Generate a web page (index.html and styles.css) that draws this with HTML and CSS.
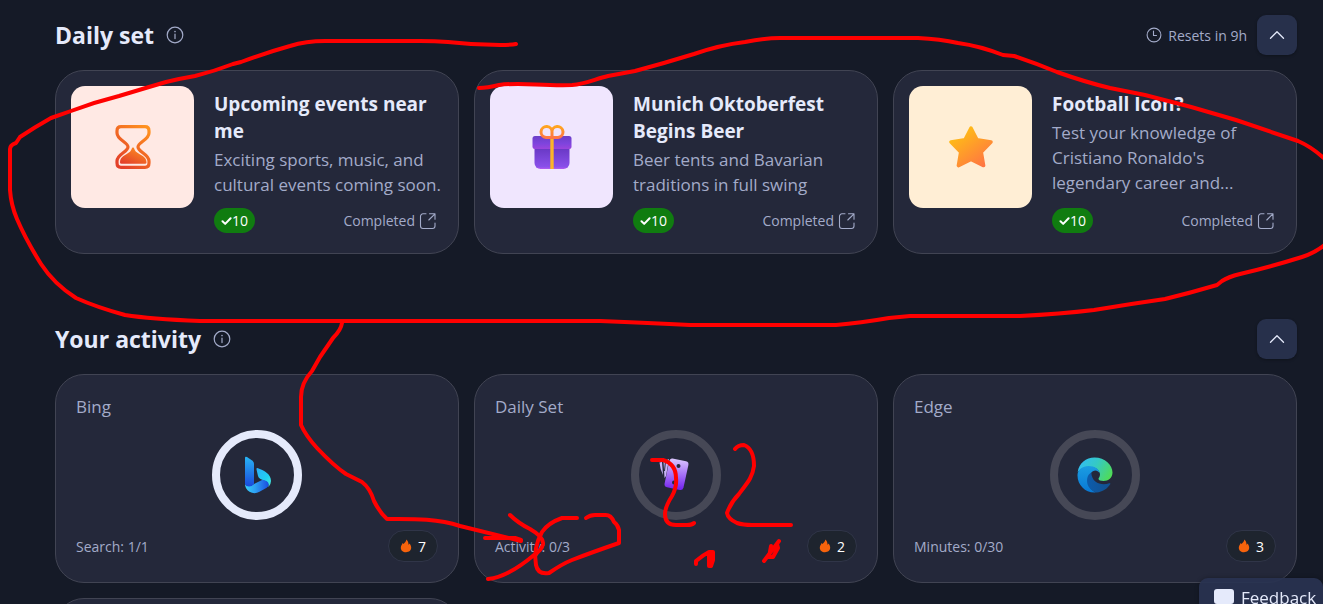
FILE: index.html
```
<!DOCTYPE html>
<html lang="en">
<head>
    <meta charset="UTF-8">
    <meta name="viewport" content="width=device-width, initial-scale=1.0">
    <title>Rewards</title>
    <link rel="stylesheet" href="styles.css">
</head>
<body>

    <!-- shared icons -->
    <svg class="defs" width="0" height="0" aria-hidden="true">
      <symbol id="info" viewBox="0 0 18 18">
        <circle cx="9" cy="9" r="7.8" fill="none" stroke="currentColor" stroke-width="1.2"/>
        <path d="M9 8v4.6" stroke="currentColor" stroke-width="1.2" stroke-linecap="round"/>
        <circle cx="9" cy="5.6" r=".8" fill="currentColor"/>
      </symbol>
      <symbol id="chevron" viewBox="0 0 16 16">
        <path d="M1.5 11.3 8 4.7l6.500 6.600" fill="none" stroke="currentColor" stroke-width="1.3" stroke-linecap="round" stroke-linejoin="round"/>
      </symbol>
      <symbol id="open" viewBox="0 0 18 18">
        <path d="M7 1.800H4A2.500 2.500 0 0 0 1.500 4.300v9.700A2.500 2.500 0 0 0 4 16.500h9.500A2.500 2.500 0 0 0 16 14v-3M10.500 1.800H16v5.500M16 1.800 9.800 8" fill="none" stroke="currentColor" stroke-width="1.1" stroke-linecap="round" stroke-linejoin="round"/>
      </symbol>
      <symbol id="check" viewBox="0 0 11 10">
        <path d="M1.500 5.200 4.200 7.900 9.600 2.300" fill="none" stroke="currentColor" stroke-width="2" stroke-linecap="round" stroke-linejoin="round"/>
      </symbol>
      <symbol id="flame" viewBox="0 0 12 14">
        <path d="M6.200.5c.3 2-1.700 3.200-2.600 4.600C3.300 4.600 3 4.200 2.600 4 2.400 5.200.8 6.600.8 8.700c0 2.700 2.200 4.600 5.200 4.600s5.200-1.900 5.200-4.700c0-1.900-.9-3.100-1.700-4.200-.2.700-.5 1.100-1 1.400C8.600 3.800 7.900 1.700 6.200.5z" fill="#f7630c"/>
      </symbol>
    </svg>

    <main>
      <section>
        <div class="section-head">
          <h1>Daily set</h1>
          <svg class="info-icon"><use href="#info"/></svg>
          <div class="resets">
            <svg viewBox="0 0 16 16" width="16" height="16"><circle cx="8" cy="8" r="6.900" fill="none" stroke="currentColor" stroke-width="1.100"/><path d="M7.500 4v4.500h3" fill="none" stroke="currentColor" stroke-width="1.100" stroke-linecap="round" stroke-linejoin="round"/></svg>
            Resets in 9h
          </div>
          <button class="collapse" aria-label="Collapse daily set"><svg><use href="#chevron"/></svg></button>
        </div>

        <div class="cards">
          <article class="card offer">
            <div class="tile tile-pink">
              <svg viewBox="0 0 36 44" width="36" height="44">
                <defs>
                  <linearGradient id="hg" x1=".9" y1="0" x2=".2" y2="1"><stop offset="0" stop-color="#ff921f"/><stop offset="1" stop-color="#e3402a"/></linearGradient>
                </defs>
                <path d="M6 1.700H30Q34 1.700 34 6V8C34 15 23 17 23 22S34 29 34 36V38Q34 42.300 30 42.300H6Q2 42.300 2 38V36C2 29 13 27 13 22S2 15 2 8V6Q2 1.700 6 1.700Z" fill="none" stroke="url(#hg)" stroke-width="3.200"/>
                <path d="M18 22.500C19.500 22.500 19.200 25 21 26.800 26 30.800 31.500 31.500 31.500 37.500Q31.500 38.800 30 38.800H6.500Q5 38.800 5 37.500C5 31.500 10 30.800 15 26.800 16.800 25 16.500 22.500 18 22.500Z" fill="url(#hg)"/>
              </svg>
            </div>
            <div class="offer-body">
              <h2>Upcoming events near me</h2>
              <p>Exciting sports, music, and cultural events coming soon.</p>
              <div class="offer-foot">
                <span class="points"><svg><use href="#check"/></svg>10</span>
                <a href="#">Completed <svg><use href="#open"/></svg></a>
              </div>
            </div>
          </article>

          <article class="card offer">
            <div class="tile tile-purple">
              <svg viewBox="0 0 40 44" width="40" height="44">
                <defs>
                  <linearGradient id="lid" x1="0" y1="0" x2="0" y2="1"><stop offset="0" stop-color="#6b3fc8"/><stop offset=".6" stop-color="#7f44de"/><stop offset="1" stop-color="#9b45dc"/></linearGradient>
                  <linearGradient id="box" x1="0" y1="0" x2="0" y2="1"><stop offset="0" stop-color="#6838c4"/><stop offset=".9" stop-color="#8a50ea"/><stop offset="1" stop-color="#b65df0"/></linearGradient>
                  <linearGradient id="bow" x1="0" y1="0" x2="0" y2="1"><stop offset="0" stop-color="#ffa51f"/><stop offset="1" stop-color="#ff7545"/></linearGradient>
                </defs>
                <path d="M2.500 23h35v15a6 6 0 0 1-6 6h-23a6 6 0 0 1-6-6z" fill="url(#box)"/>
                <rect x=".5" y="11" width="39" height="13" rx="2.500" fill="url(#lid)"/>
                <rect x="18.300" y="13" width="3.400" height="31" fill="#fbb429"/>
                <path d="M20 12.500V7.500A5.500 5.500 0 1 0 14 12.500ZM20 12.500V7.500A5.500 5.500 0 1 1 26 12.500Z" fill="#f0e4fd" stroke="url(#bow)" stroke-width="3"/>
              </svg>
            </div>
            <div class="offer-body">
              <h2>Munich Oktoberfest Begins Beer</h2>
              <p>Beer tents and Bavarian traditions in full swing</p>
              <div class="offer-foot">
                <span class="points"><svg><use href="#check"/></svg>10</span>
                <a href="#">Completed <svg><use href="#open"/></svg></a>
              </div>
            </div>
          </article>

          <article class="card offer">
            <div class="tile tile-cream">
              <svg viewBox="0 0 44 44" width="44" height="44">
                <defs>
                  <linearGradient id="star" x1=".1" y1=".1" x2=".8" y2="1"><stop offset="0" stop-color="#ffc113"/><stop offset="1" stop-color="#ff7642"/></linearGradient>
                </defs>
                <path d="M22 3 28 14.800 42 17 32.300 27 34.600 40.600 22 34.500 9.400 40.600 11.700 27 2 17 16 14.800Z" fill="url(#star)" stroke="url(#star)" stroke-width="3.500" stroke-linejoin="round"/>
              </svg>
            </div>
            <div class="offer-body">
              <h2>Football Icon?</h2>
              <p>Test your knowledge of Cristiano Ronaldo's legendary career and...</p>
              <div class="offer-foot">
                <span class="points"><svg><use href="#check"/></svg>10</span>
                <a href="#">Completed <svg><use href="#open"/></svg></a>
              </div>
            </div>
          </article>
        </div>
      </section>

      <section>
        <div class="section-head">
          <h1>Your activity</h1>
          <svg class="info-icon"><use href="#info"/></svg>
          <button class="collapse" aria-label="Collapse your activity"><svg><use href="#chevron"/></svg></button>
        </div>

        <div class="cards">
          <article class="card activity">
            <h3>Bing</h3>
            <div class="ring ring-done">
              <svg viewBox="0 0 28 38" width="28" height="38">
                <defs>
                  <linearGradient id="b1" x1="0" y1="0" x2="0" y2="1"><stop offset="0" stop-color="#28b5f5"/><stop offset="1" stop-color="#1a49dc"/></linearGradient>
                  <linearGradient id="b2" x1="0" y1="0" x2="1" y2="0"><stop offset="0" stop-color="#36d0fb"/><stop offset=".45" stop-color="#2d9ef2"/><stop offset="1" stop-color="#1a4ce0"/></linearGradient>
                  <linearGradient id="b3" x1="0" y1="0" x2="1" y2="1"><stop offset="0" stop-color="#2caef8"/><stop offset=".6" stop-color="#20cff0"/><stop offset="1" stop-color="#4eeed6"/></linearGradient>
                </defs>
                <path d="M13.500 13.500q-.3-2 1.500-1.300C21.500 14.500 28 18 28 25q0 3-2.500 6 .5-5-3.500-6L17.500 23q-2-1-2.500-3Z" fill="url(#b3)"/>
                <path d="M2 28q2 3 6 1.500L19.500 23.800q6 1 6.200 4.500 0 2-2 3.500L16.500 35.800q-5 2.800-10 0Q2 33 2 28Z" fill="url(#b2)"/>
                <path d="M2 2Q2 0 4 1l5.500 3.800Q11 6 11 8v20q-2 2.500-5 2.500T2 28Z" fill="url(#b1)"/>
              </svg>
            </div>
            <div class="activity-foot">
              <span>Search: 1/1</span>
              <span class="streak"><svg><use href="#flame"/></svg>7</span>
            </div>
          </article>

          <article class="card activity">
            <h3>Daily Set</h3>
            <div class="ring">
              <svg viewBox="0 0 36 36" width="36" height="36">
                <defs>
                  <linearGradient id="cardg" x1="0" y1="0" x2="0" y2="1"><stop offset="0" stop-color="#dcc8ff"/><stop offset="1" stop-color="#7220ee"/></linearGradient>
                </defs>
                <path d="M1.500 5.500 4 5l1 13Q2 12 1.500 5.500ZM5.500 4.500 11 2 8 19 6.500 21Z" fill="#c9b3f7"/>
                <path d="M7.500 4 6.500 14" stroke="#24283a"/>
                <path d="M14.500 1.500 28 4.300q3 .8 2.400 3.700L25.500 30.500q-.8 3-3.700 2.400L9 30.200Q6 29.500 6.600 26.500L11.300 4Q12 1 14.500 1.500Z" fill="url(#cardg)"/>
                <circle cx="20.500" cy="9" r="2" fill="#24283a"/>
                <circle cx="16" cy="25.500" r="2" fill="#24283a"/>
              </svg>
            </div>
            <div class="activity-foot">
              <span>Activity: 0/3</span>
              <span class="streak"><svg><use href="#flame"/></svg>2</span>
            </div>
          </article>

          <article class="card activity">
            <h3>Edge</h3>
            <div class="ring">
              <svg viewBox="0 0 36 36" width="36" height="36">
                <defs>
                  <linearGradient id="e1" x1="0" y1=".3" x2="1" y2=".7"><stop offset="0" stop-color="#32bdf3"/><stop offset=".45" stop-color="#35c9c5"/><stop offset="1" stop-color="#50dc55"/></linearGradient>
                  <linearGradient id="e2" x1="0" y1="0" x2="0" y2="1"><stop offset="0" stop-color="#1b9de2"/><stop offset="1" stop-color="#0878d4"/></linearGradient>
                  <linearGradient id="e3" x1="0" y1="0" x2="1" y2="0"><stop offset="0" stop-color="#0d5cab"/><stop offset="1" stop-color="#12508f"/></linearGradient>
                </defs>
                <path d="M.7 15C2 6 9 .5 17.500.5 28 .5 35.500 8 35.500 15.500c0 5-4 8.500-9 8.500-3 0-5-1-5-2.300 0-1 1.500-1.700 1.500-4.200 0-3-3-7.500-10-7.500C7.500 10 3 12 .7 15Z" fill="url(#e1)"/>
                <path d="M.5 18C.7 12.500 5.500 9 11.500 9c6.500 0 10.500 3 11 7-1-1.500-2.500-2.500-4-2.500-3.500 0-7.500 5-7.500 10 0 6 4 10.500 8 11.900C9 36.400.2 28.500.5 18Z" fill="url(#e2)"/>
                <path d="M14.300 15.500C9.500 18 9 25 11.500 29.500c2 3.500 5 5.500 8 5.900 6-.5 11-3.700 13.700-8.200.5-.9-.2-1.200-1-.9-7 2.600-17.500.2-17.900-10.800Z" fill="url(#e3)"/>
              </svg>
            </div>
            <div class="activity-foot">
              <span>Minutes: 0/30</span>
              <span class="streak"><svg><use href="#flame"/></svg>3</span>
            </div>
          </article>

          <article class="card activity"></article>
        </div>
      </section>
    </main>

    <button class="feedback">
      <svg viewBox="0 0 22 20" width="22" height="20"><path d="M4 1h14q3 0 3 3v9q0 3-3 3h-7l-5 4v-4H4q-3 0-3-3V4q0-3 3-3z" fill="#e5eafb"/></svg>
      Feedback
    </button>

    <!-- pen marks drawn over the page -->
    <svg class="ink" viewBox="0 0 1323 604" aria-hidden="true">
      <path d="M516 44Q512 45 500 45C482 45 465 44 448 42Q435 41 420 41H325Q306 41 290 46Q265 53 241 62L233 64Q215 71 195 76L179 79L166 82L149 87L119 96Q95 102 71 111L51 118Q35 127 20 137L16 143Q10 145 10 149V190Q11 205 17 219Q26 240 41 264Q54 284 76 298Q96 307 125 315Q150 319 200 321H600Q650 323 690 325H836Q860 323 889 318L910 316H1020Q1060 314 1094 310Q1130 304 1165 299Q1190 293 1217 285L1222 281Q1228 277 1240 274Q1270 267 1302 257Q1315 253 1326 244"/>
      <path d="M479 88Q487 88 499 85C520 82 540 86 572 85C586 84 595 79 608 76L635 71Q665 63 694 54Q720 45 745 42Q765 38 780 38H918Q940 39 958 43Q980 46 1003 55L1014 56Q1035 63 1057 72Q1085 82 1110 88L1145 95Q1190 106 1236 120L1298 141Q1312 147 1326 160"/>
      <path d="M342 323Q341 330 333 338L320 357L312 371Q301 383 301 397V425Q306 436 317 448Q334 466 346 474L362 482Q370 488 374 501Q380 513 387 519C410 519 436 518 460 526L521 541M485 538H515L521 540"/>
      <path d="M510 515Q518 523 530 529Q544 537 543 544Q542 550 534 555Q508 577 488 579"/>
      <path d="M577 518H562Q548 523 542 532Q533 548 536 565Q538 575 549 573Q562 564 572 560Q590 553 619 543V530Q618 525 614 522Q611 514 604 515H595Q590 515 586 518"/>
      <path d="M652 460H663Q676 464 676 478Q677 487 672 496Q665 507 665 514Q665 525 676 525H687Q692 525 694 523"/>
      <path d="M735 449Q738 445 744 445C752 448 754 456 754 466C752 480 745 485 739 494Q731 502 727 513Q728 519 737 523Q743 525 752 525H791"/>
      <path d="M696 564V561Q703 555 709 552H713V560L711 566H709V553"/>
      <path d="M764 561 779 541M771 546 769 557 773 557 778 548 777 544"/>
    </svg>

</body>
</html>
```
FILE: styles.css
```
body {
    font-family: "Open Sans", "Noto Sans", sans-serif;
    background-color: #151a27;
    color: #e5eafb;
    margin: 0;
}

main {
    padding: 15px 26px 15px 55px;
}

section + section {
    margin-top: 65px;
}

h1, h2, h3, p {
    margin: 0;
}

.defs {
    position: absolute;
}

.section-head {
    display: flex;
    align-items: center;
    height: 40px;
    margin-bottom: 15px;
}

.section-head h1 {
    font-size: 23px;
    line-height: 32px;
    font-weight: 700;
}

.info-icon {
    width: 18px;
    height: 18px;
    margin-left: 12px;
    color: #a3abc9;
}

.resets {
    display: flex;
    align-items: center;
    gap: 6px;
    margin-left: auto;
    font-size: 14px;
    color: #a3abc9;
}

.collapse {
    display: flex;
    align-items: center;
    justify-content: center;
    width: 40px;
    height: 40px;
    padding: 0;
    margin-left: auto;
    border: none;
    border-radius: 9px;
    background-color: #27304b;
    color: #e5eafb;
    box-shadow: 0 1px 3px rgba(0,0,0,0.3);
}

.resets + .collapse {
    margin-left: 10px;
}

.collapse svg {
    width: 16px;
    height: 16px;
}

.cards {
    display: grid;
    grid-template-columns: repeat(3, 1fr);
    gap: 15px;
}

.card {
    box-sizing: border-box;
    background-color: #24283a;
    border: 1px solid #414453;
    border-radius: 29px;
}

/* daily set */
.offer {
    display: flex;
    align-items: flex-start;
    gap: 20px;
    padding: 15px;
}

.tile {
    display: flex;
    align-items: center;
    justify-content: center;
    flex: none;
    width: 123px;
    height: 122px;
    border-radius: 14px;
}

.tile-pink { background-color: #ffe9e4; }
.tile-purple { background-color: #f0e6fe; }
.tile-cream { background-color: #ffeed5; }

.offer-body {
    display: flex;
    flex-direction: column;
    align-self: stretch;
    flex: 1;
    min-width: 0;
    padding: 5px 0;
}

.offer-body h2 {
    font-size: 19px;
    line-height: 27px;
    font-weight: 700;
    margin-bottom: 2px;
}

.offer-body p {
    font-size: 17px;
    line-height: 25px;
    color: #a3abc9;
    margin-bottom: 11px;
}

.offer-foot {
    display: flex;
    align-items: center;
    justify-content: space-between;
    margin-top: auto;
    padding-right: 6px;
}

.points {
    display: flex;
    align-items: center;
    justify-content: center;
    width: 41px;
    height: 25px;
    border-radius: 13px;
    background-color: #107c10;
    color: white;
    font-size: 14px;
}

.points svg {
    width: 11px;
    height: 10px;
}

.offer-foot a {
    display: flex;
    align-items: center;
    gap: 4px;
    font-size: 14px;
    color: #a3abc9;
    text-decoration: none;
}

.offer-foot a svg {
    width: 18px;
    height: 18px;
}

/* your activity */
.activity {
    display: flex;
    flex-direction: column;
    min-height: 209px;
    padding: 20px;
}

.activity h3 {
    font-size: 17px;
    line-height: 24px;
    font-weight: 400;
    color: #a3abc9;
}

.ring {
    box-sizing: border-box;
    display: flex;
    align-items: center;
    justify-content: center;
    align-self: center;
    width: 90px;
    height: 90px;
    margin: 11px 0 10px;
    border: 8px solid #464856;
    border-radius: 50%;
}

.ring-done {
    border-color: #e5eafb;
}

.activity-foot {
    display: flex;
    align-items: center;
    justify-content: space-between;
    font-size: 14px;
    color: #a3abc9;
}

.streak {
    box-sizing: border-box;
    display: flex;
    align-items: center;
    justify-content: center;
    gap: 6px;
    width: 50px;
    height: 32px;
    border: 1px solid #303548;
    border-radius: 16px;
    background-color: #1e242e;
    color: white;
}

.streak svg {
    width: 12px;
    height: 14px;
}

.feedback {
    position: fixed;
    right: 0;
    bottom: 0;
    display: flex;
    align-items: flex-start;
    gap: 6px;
    width: 124px;
    height: 26px;
    padding: 10px 0 0 14px;
    overflow: hidden;
    border: none;
    border-radius: 9px 9px 0 0;
    background-color: rgba(41,51,81,0.93);
    color: #e5eafb;
    font-family: inherit;
    font-size: 17px;
    line-height: 20px;
    box-shadow: 0 0 4px rgba(0,0,0,0.3);
}

.feedback svg {
    flex: none;
}

.ink {
    position: absolute;
    top: 0;
    left: 0;
    width: 100%;
    pointer-events: none;
    fill: none;
    stroke: #ff0000;
    stroke-width: 4;
    stroke-linecap: round;
    stroke-linejoin: round;
}
```
